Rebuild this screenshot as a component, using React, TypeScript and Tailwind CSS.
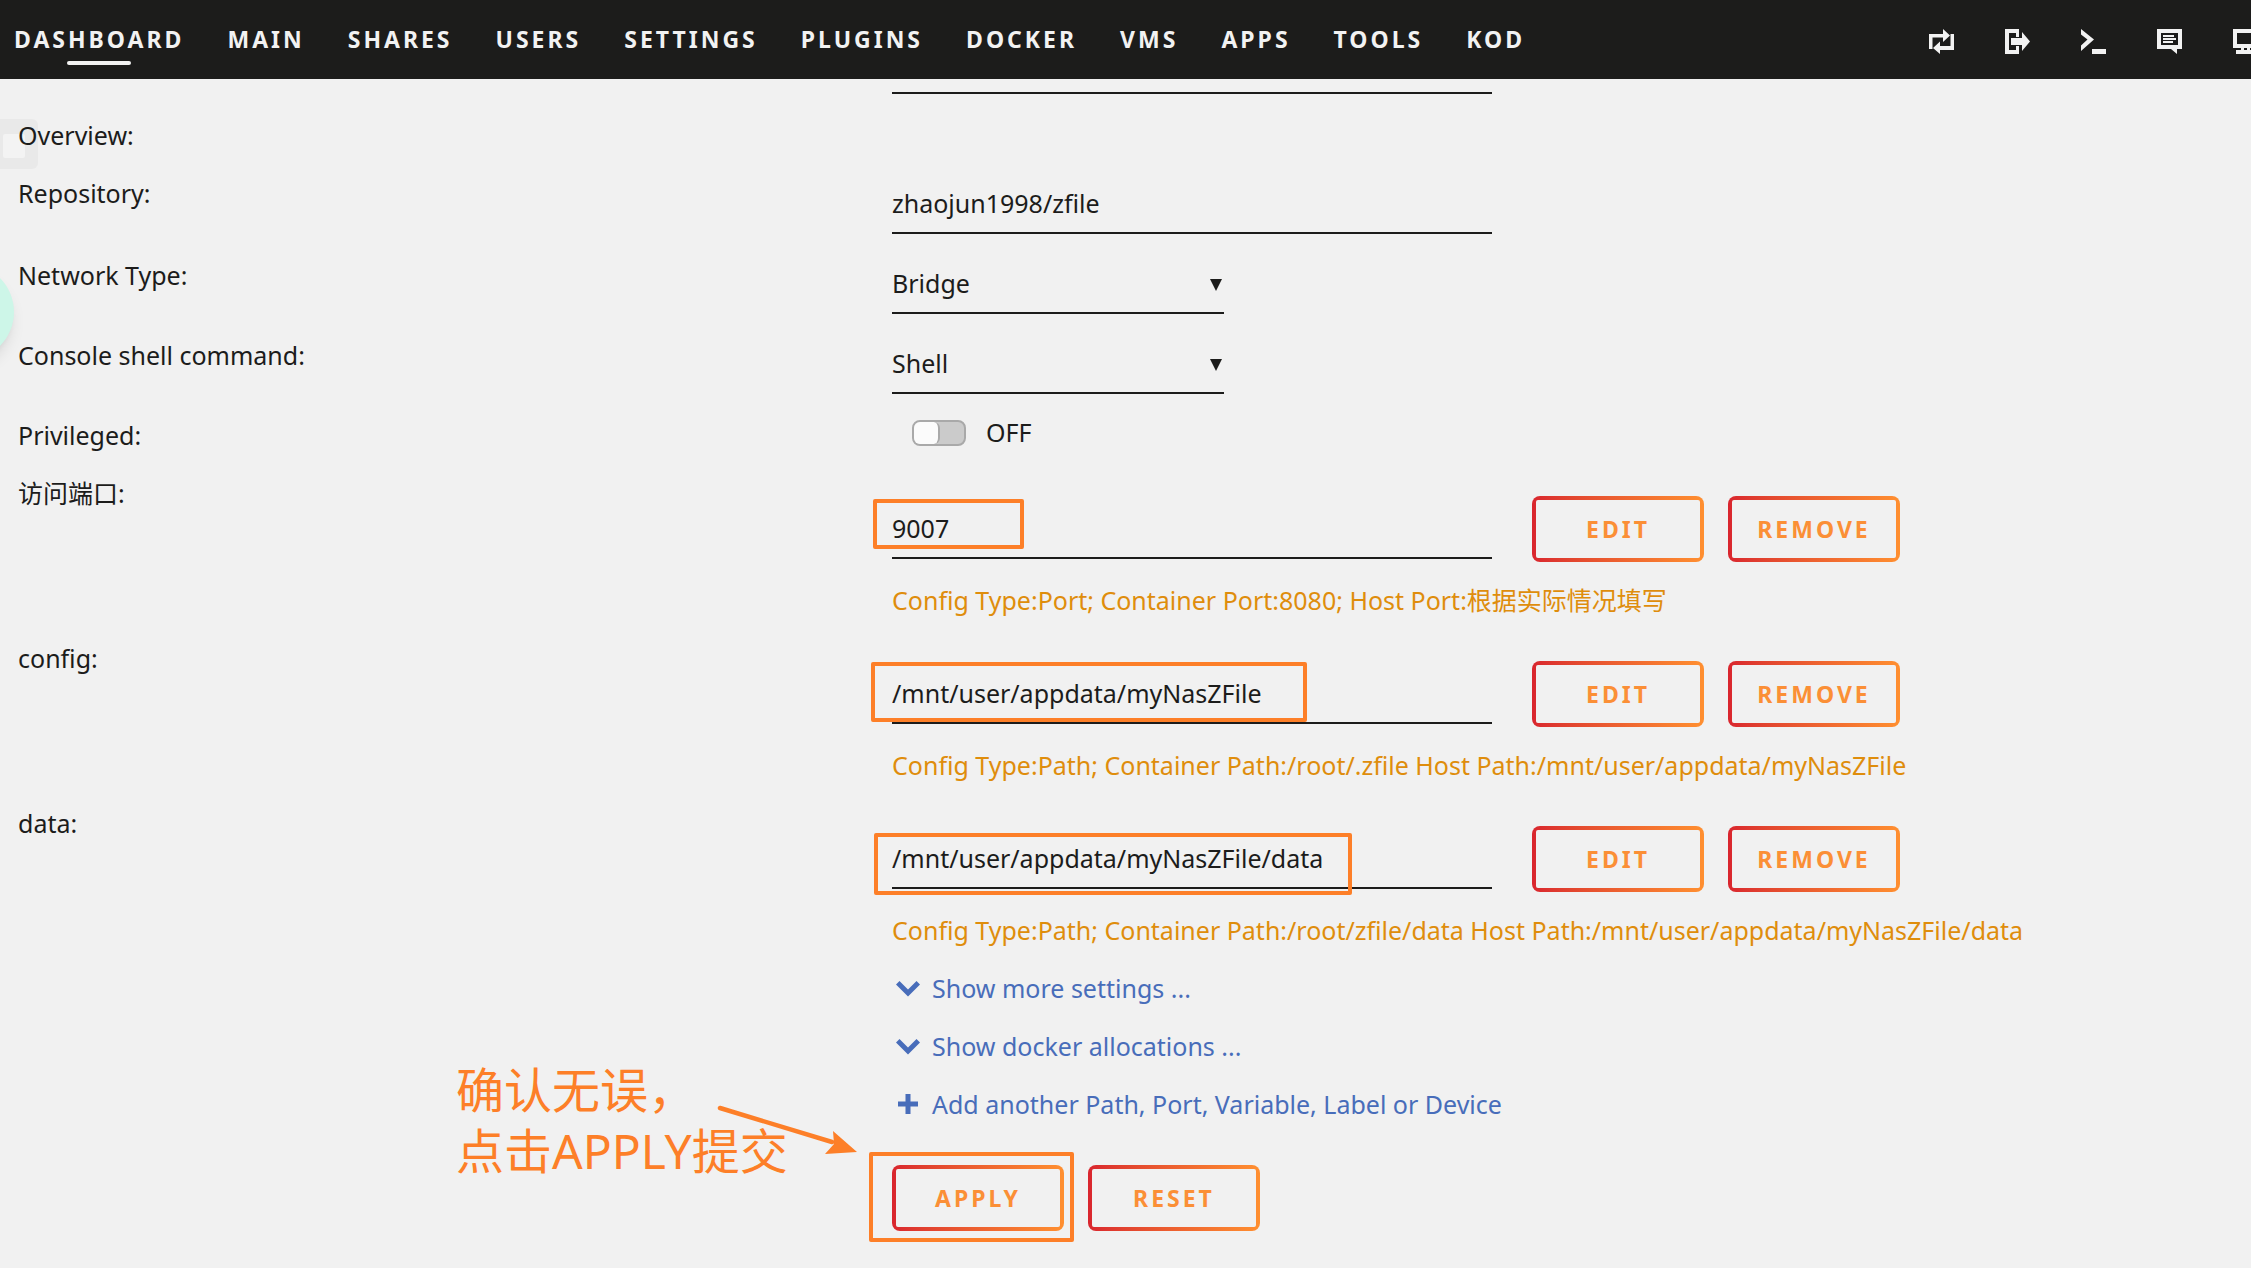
import { ReactNode, useState } from "react";

const navItems = [
  "DASHBOARD",
  "MAIN",
  "SHARES",
  "USERS",
  "SETTINGS",
  "PLUGINS",
  "DOCKER",
  "VMS",
  "APPS",
  "TOOLS",
  "KOD",
];

const toolIcons = [
  {
    name: "Switch language",
    path: "M0 5h14V0l7 6.5-7 6.5V8.500H3.500V20H0zM25 5v16H11v4l-7-6 7-6.500V17h10.500V5z",
  },
  {
    name: "Logout",
    path: "M0 0h14v8h-3V4H4v17h7v-4h3v8H0zM6 9h11V3l8 9.500-8 9.500v-6H6z",
  },
  {
    name: "Terminal",
    path: "M0 0l13 10.500L0 22v-5.500l6.500-6L0 5.500zM11 20h14v5H11z",
  },
  {
    name: "Feedback",
    path: "M0 0h25v20h-5v5l-6-5H0zM4 4v12h17V4zM6 6h11v2H6zM6 9h13v2H6zM6 12h10v2H6z",
  },
  {
    name: "Info",
    path: "M0 0h25v19H0zM4 4v11h17V4zM3 21h19v4H3zM8 19h3v2H8zM14 19h3v2h-3z",
  },
];

interface Config {
  id: string;
  label: string;
  value: string;
  help: string;
  frame: string;
}

const configs: Config[] = [
  {
    id: "port",
    label: "访问端口:",
    value: "9007",
    help: "Config Type:Port; Container Port:8080; Host Port:根据实际情况填写",
    frame: "-left-[19px] top-0 w-[151px] h-[50px]",
  },
  {
    id: "config",
    label: "config:",
    value: "/mnt/user/appdata/myNasZFile",
    help: "Config Type:Path; Container Path:/root/.zfile Host Path:/mnt/user/appdata/myNasZFile",
    frame: "-left-[21px] -top-[2px] w-[436px] h-[60px]",
  },
  {
    id: "data",
    label: "data:",
    value: "/mnt/user/appdata/myNasZFile/data",
    help: "Config Type:Path; Container Path:/root/zfile/data Host Path:/mnt/user/appdata/myNasZFile/data",
    frame: "-left-[18px] top-1 w-[478px] h-[62px]",
  },
];

const Frame = ({ className }: { className: string }) => (
  <div
    className={`absolute pointer-events-none border-4 border-[#fd7f28] rounded-xs ${className}`}
  />
);

const Row = ({
  label,
  htmlFor,
  children,
}: {
  label?: string;
  htmlFor?: string;
  children?: ReactNode;
}) => (
  <div className="flex items-start pb-4">
    <div className="w-[874px] shrink-0 leading-[42px]">
      {label &&
        (htmlFor ? <label htmlFor={htmlFor}>{label}</label> : <span>{label}</span>)}
    </div>
    <div className="min-w-0 flex-1">{children}</div>
  </div>
);

const ActionButton = ({ children }: { children: string }) => (
  <button
    type="button"
    className="w-[172px] h-[66px] rounded-lg p-1 bg-linear-to-r from-[#d9252e] to-[#ff8f30]"
  >
    <span className="flex h-full items-center justify-center rounded-xs bg-[#f1f1f1] text-[23px] font-bold tracking-[3px] text-[#fb8f36]">
      {children}
    </span>
  </button>
);

const SelectBox = ({ id, options }: { id: string; options: string[] }) => (
  <div className="relative w-[332px] pt-[2px]">
    <select
      id={id}
      className="w-full h-[58px] appearance-none border-b-2 border-[#1c1c1b] bg-transparent outline-none"
    >
      {options.map((o) => (
        <option key={o}>{o}</option>
      ))}
    </select>
    <svg
      className="absolute right-[2px] top-[25px] w-3 h-3 pointer-events-none"
      viewBox="0 0 12 12"
      fill="#1c1c1b"
    >
      <path d="M0 0h12L6 12z" />
    </svg>
  </div>
);

const inputClass =
  "w-[600px] border-b-2 border-[#1c1c1b] bg-transparent outline-none";

const App = () => {
  const [privileged, setPrivileged] = useState(false);

  return (
    <div className="relative min-h-screen overflow-hidden bg-[#f1f1f1] text-[25px] text-[#1c1c1b] font-['Noto_Sans','Noto_Sans_CJK_SC',sans-serif]">
      <header className="flex h-[79px] items-center bg-[#1c1c1b] text-[#f2f2f2]">
        <nav className="flex flex-1 gap-[43px] pl-[14px] pb-[2px] text-[23px] font-bold tracking-[3px]">
          {navItems.map((item, i) => (
            <a key={item} href="#" className="relative leading-[40px]">
              {item}
              {i === 0 && (
                <span className="absolute left-1/2 -bottom-[6px] w-16 h-1 -translate-x-1/2 rounded-full bg-[#f2f2f2]" />
              )}
            </a>
          ))}
        </nav>
        <div className="flex shrink-0 gap-[50px] -mr-2 pt-1">
          {toolIcons.map((icon) => (
            <a key={icon.name} href="#" aria-label={icon.name}>
              <svg
                className="w-[26px] h-[26px]"
                viewBox="0 0 26 26"
                fill="currentColor"
                fillRule="evenodd"
              >
                <path d={icon.path} />
              </svg>
            </a>
          ))}
        </div>
      </header>

      {/* page decorations hanging off the left edge */}
      <div className="absolute -left-[10px] top-[119px] w-12 h-[50px] rounded-md bg-[#e9e9e9] px-[13px] pt-[15px] pb-[11px]">
        <div className="h-full rounded-xs bg-[#f3f3f3]" />
      </div>
      <div className="absolute -left-[82px] top-[264px] w-24 h-24 rounded-full bg-[#cdf6e8] shadow-lg" />

      <form className="relative pl-[18px]">
        <div className="pl-[874px] pb-5 flex">
          <input aria-label="Name" className={`${inputClass} h-[15px]`} />
        </div>

        <Row label="Overview:" />
        <Row label="Repository:" htmlFor="repository">
          <div className="flex pt-[2px] pb-1">
            <input
              id="repository"
              defaultValue="zhaojun1998/zfile"
              className={`${inputClass} h-[60px]`}
            />
          </div>
        </Row>
        <Row label="Network Type:" htmlFor="network">
          <div className="flex pb-1">
            <SelectBox id="network" options={["Bridge", "Host", "None"]} />
          </div>
        </Row>
        <Row label="Console shell command:" htmlFor="shell">
          <div className="flex pb-1">
            <SelectBox id="shell" options={["Shell", "Bash"]} />
          </div>
        </Row>
        <Row label="Privileged:" htmlFor="privileged">
          <div className="flex h-[38px] items-center gap-5 pl-5">
            <input
              id="privileged"
              type="checkbox"
              role="switch"
              checked={privileged}
              onChange={(e) => setPrivileged(e.target.checked)}
              className="flex w-[54px] h-[26px] appearance-none rounded-lg border-2 border-[#a9a9a9] bg-[#cbcbcb] before:w-[26px] before:h-full before:rounded-md before:border-r-2 before:border-[#a9a9a9] before:bg-[#fbfbfb] checked:justify-end"
            />
            <span>{privileged ? "ON" : "OFF"}</span>
          </div>
        </Row>

        {configs.map((c) => (
          <Row key={c.id} label={c.label} htmlFor={c.id}>
            <div className="flex items-center pt-6">
              <div className="relative flex">
                <input
                  id={c.id}
                  defaultValue={c.value}
                  className={`${inputClass} h-[60px]`}
                />
                <Frame className={c.frame} />
              </div>
              <div className="flex gap-6 pl-10">
                <ActionButton>EDIT</ActionButton>
                <ActionButton>REMOVE</ActionButton>
              </div>
            </div>
            <p className="pt-[17px] leading-[42px] text-[#df8d0c]">{c.help}</p>
          </Row>
        ))}

        {["Show more settings ...", "Show docker allocations ..."].map((text) => (
          <Row key={text}>
            <a href="#" className="flex items-center gap-3 pl-1 leading-[42px] text-[#486dba]">
              <svg className="w-6 h-6" viewBox="0 0 24 24" fill="currentColor">
                <path d="M3.500 5L12 13.500 20.500 5 24 8.500 12 20.500 0 8.500z" />
              </svg>
              {text}
            </a>
          </Row>
        ))}
        <Row>
          <a href="#" className="flex items-center gap-3 pl-1 leading-[42px] text-[#486dba]">
            <svg className="w-6 h-6" viewBox="0 0 24 24" fill="currentColor">
              <path d="M9.500 2h5v7.500H22v5h-7.500V22h-5v-7.500H2v-5h7.500z" />
            </svg>
            Add another Path, Port, Variable, Label or Device
          </a>
        </Row>

        <Row>
          <div className="relative flex gap-6 pt-6">
            <ActionButton>APPLY</ActionButton>
            <ActionButton>RESET</ActionButton>
            <Frame className="-left-[23px] top-[11px] w-[205px] h-[90px]" />
            <p className="absolute -left-[436px] -top-[82px] whitespace-nowrap text-[48px] leading-[61px] text-[#fd7f28]">
              确认无误，
              <br />
              点击APPLY提交
            </p>
            <svg
              className="absolute -left-[175px] -top-[38px] w-[140px] h-[52px]"
              viewBox="0 0 140 52"
              fill="#fd7f28"
            >
              <path d="M3 5l112 34" stroke="#fd7f28" strokeWidth="4.500" strokeLinecap="round" />
              <path d="M116 28l24 21-32 2 9-10z" />
            </svg>
          </div>
        </Row>
      </form>
    </div>
  );
};

export default App;
